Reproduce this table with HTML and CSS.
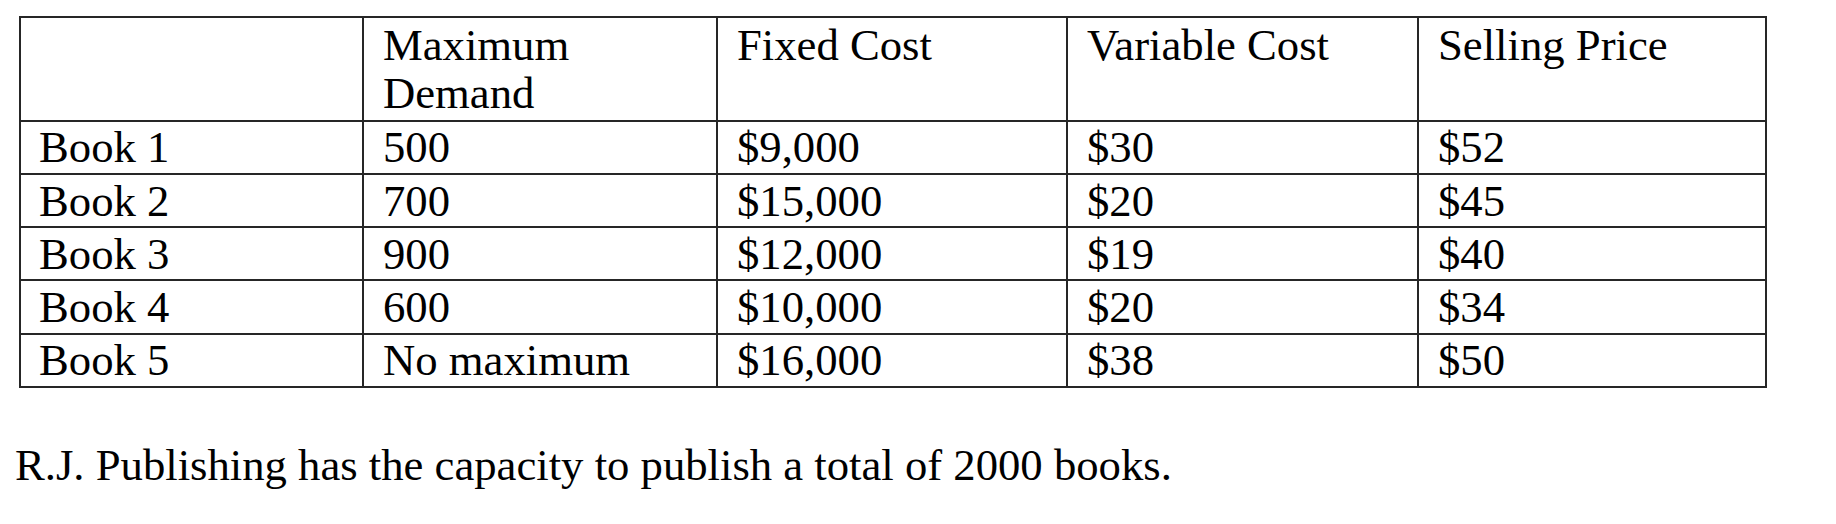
FILE: index.html
```html
<!DOCTYPE html>
<html lang="en">
<head>
<meta charset="utf-8">
<title>R.J. Publishing</title>
<link rel="stylesheet" href="styles.css">
</head>
<body>
<main class="page">
  <table class="books">
    <colgroup>
      <col class="c-name">
      <col class="c-demand">
      <col class="c-fixed">
      <col class="c-var">
      <col class="c-price">
    </colgroup>
    <thead>
      <tr class="head-row">
        <th></th>
        <th>Maximum Demand</th>
        <th>Fixed Cost</th>
        <th>Variable Cost</th>
        <th>Selling Price</th>
      </tr>
    </thead>
    <tbody>
      <tr><td>Book 1</td><td>500</td><td>$9,000</td><td>$30</td><td>$52</td></tr>
      <tr><td>Book 2</td><td>700</td><td>$15,000</td><td>$20</td><td>$45</td></tr>
      <tr><td>Book 3</td><td>900</td><td>$12,000</td><td>$19</td><td>$40</td></tr>
      <tr><td>Book 4</td><td>600</td><td>$10,000</td><td>$20</td><td>$34</td></tr>
      <tr><td>Book 5</td><td>No maximum</td><td>$16,000</td><td>$38</td><td>$50</td></tr>
    </tbody>
  </table>
  <p class="note">R.J. Publishing has the capacity to publish a total of 2000 books.</p>
</main>
</body>
</html>
```

FILE: styles.css
```css
html, body {
  margin: 0;
  padding: 0;
  background: #ffffff;
}

body {
  font-family: "Liberation Serif", "Times New Roman", serif;
  font-size: 44.7px;
  line-height: 48px;
  color: #000000;
}

.page {
  padding: 16px 0 0 15px;
}

.books {
  margin-left: 4px;
  border-collapse: collapse;
  table-layout: fixed;
  width: 1746px;
}

.c-name { width: 343px; }
.c-demand { width: 354px; }
.c-fixed { width: 350px; }
.c-var { width: 351px; }
.c-price { width: 348px; }

.books th,
.books td {
  border: 2px solid #262626;
  padding: 1.75px 8px 1.5px 19px;
  text-align: left;
  vertical-align: top;
  font-weight: normal;
}

.books th {
  padding-top: 2.5px;
  padding-bottom: 3px;
  height: 96px;
  box-sizing: content-box;
}

.books td:first-child {
  padding-left: 18px;
}

.note {
  margin: 53px 0 0 0;
}
```
